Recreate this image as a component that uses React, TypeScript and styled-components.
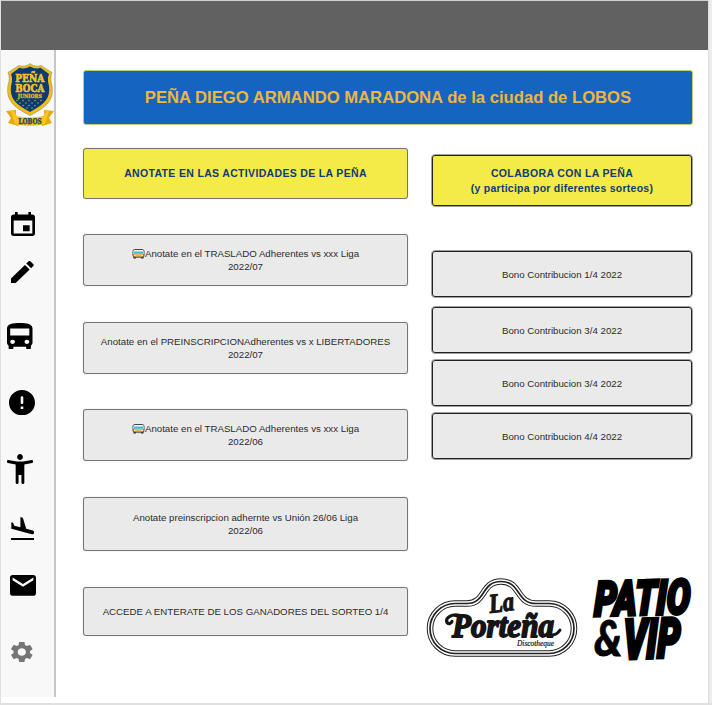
import React from "react";
import styled, { createGlobalStyle } from "styled-components";

const GlobalStyle = createGlobalStyle`
  * { box-sizing: border-box; }
  body { margin: 0; background: #fff; font-family: "Liberation Sans", Arial, sans-serif; }
`;

const Page = styled.div`
  width: 712px;
  height: 705px;
  display: flex;
  flex-direction: column;
  overflow: hidden;
  background: #fff;
  border-left: 1px solid #e0e0e0;
  border-bottom: 2px solid #e0e0e0;
  box-shadow: inset -3px 0 0 #ececec, inset -4px 0 0 #dcdcdc;
`;

const Header = styled.header`
  height: 50px;
  flex: none;
  margin-right: 4px;
  background: #616161;
  border-top: 1px solid #d0d0d0;
`;

const Body = styled.div`
  display: flex;
  height: 647px;
`;

const Sidebar = styled.nav`
  width: 55px;
  height: 647px;
  flex: none;
  background: #f8f8f8;
  border-right: 2px solid #c6c6c6;
  display: flex;
  flex-direction: column;
  align-items: flex-start;
`;

const IconSlot = styled.span<{ $left: number; $gap: number; $color?: string }>`
  display: block;
  line-height: 0;
  margin-left: ${(p) => p.$left}px;
  margin-top: ${(p) => p.$gap}px;
  color: ${(p) => p.$color ?? "#000"};
`;

const Main = styled.main`
  flex: 1;
  padding: 20px 0 0 27px;
`;

const Banner = styled.h1`
  width: 610px;
  height: 55px;
  margin: 0;
  display: flex;
  align-items: center;
  justify-content: center;
  background: #1565c0;
  border: 1px solid #b9cf7d;
  border-radius: 3px;
  color: #edb63f;
  font-size: 16.65px;
  line-height: 20px;
  white-space: nowrap;
`;

const Columns = styled.div`
  display: flex;
  gap: 23px;
  align-items: flex-start;
`;

const Column = styled.section<{ $width: number }>`
  width: ${(p) => p.$width}px;
  display: flex;
  flex-direction: column;
`;

const Card = styled.button<{ $gap: number; $height: number; $strong?: boolean }>`
  width: 100%;
  height: ${(p) => p.$height}px;
  margin: ${(p) => p.$gap}px 0 0;
  padding: 0;
  display: flex;
  flex-direction: column;
  align-items: center;
  justify-content: center;
  background: #eaeaea;
  border: 1px solid ${(p) => (p.$strong ? "#a0a0a0" : "#757575")};
  border-radius: ${(p) => (p.$strong ? 4 : 3)}px;
  box-shadow: ${(p) => (p.$strong ? "inset 0 0 0 1px #222" : "0 0 1px #aaa")};
  color: #2a2a2a;
  font-family: inherit;
  font-size: 9.7px;
  line-height: 13px;
  white-space: nowrap;
`;

const HeadingCard = styled(Card)`
  background: #f4eb49;
  color: #0d3c74;
  font-size: 10.5px;
  font-weight: 700;
  letter-spacing: 0.35px;
  line-height: 15px;
`;

const Line = styled.span<{ $spacing?: number }>`
  display: flex;
  align-items: center;
  letter-spacing: ${(p) => (p.$spacing === undefined ? "inherit" : `${p.$spacing}px`)};
`;

const Logos = styled.div`
  display: flex;
  margin: 115px 0 0 -6px;
  width: 275px;

  svg {
    flex: none;
    overflow: visible;
  }
`;

const icons = [
  { d: "M17 12h-5v5h5v-5zM16 1v2H8V1H6v2H5c-1.11 0-1.99.9-1.99 2L3 19a2 2 0 0 0 2 2h14c1.1 0 2-.9 2-2V5c0-1.1-.9-2-2-2h-1V1h-2zm3 18H5V8h14v11z", box: "3 1 18 20", x: 11, y: 212, w: 24, h: 24 },
  { d: "M3 17.25V21h3.75L17.81 9.94l-3.75-3.75L3 17.25zM20.71 7.04a.996.996 0 0 0 0-1.41l-2.34-2.34a.996.996 0 0 0-1.41 0l-1.83 1.83 3.75 3.75 1.83-1.83z", box: "3 3 18 18", x: 11, y: 261, w: 22.7, h: 22 },
  { d: "M4 16c0 .88.39 1.67 1 2.22V20c0 .55.45 1 1 1h1c.55 0 1-.45 1-1v-1h8v1c0 .55.45 1 1 1h1c.55 0 1-.45 1-1v-1.78c.61-.55 1-1.34 1-2.22V6c0-3.5-3.58-4-8-4s-8 .5-8 4v10zm3.5 1c-.83 0-1.5-.67-1.5-1.5S6.67 14 7.5 14s1.5.67 1.5 1.5S8.33 17 7.5 17zm9 0c-.83 0-1.5-.67-1.5-1.5s.67-1.5 1.5-1.5 1.5.67 1.5 1.5-.67 1.5-1.5 1.5zm1.5-6H6V6h12v5z", box: "4 2 16 19", x: 7.3, y: 322.5, w: 25.5, h: 26.5 },
  { d: "M12 2C6.48 2 2 6.48 2 12s4.48 10 10 10 10-4.48 10-10S17.52 2 12 2zm0 11c-.55 0-1-.45-1-1V8c0-.55.45-1 1-1s1 .45 1 1v4c0 .55-.45 1-1 1zm1 4h-2v-2h2v2z", box: "2 2 20 20", x: 9, y: 390, w: 26, h: 25.3 },
  { d: "M20.1 6c-2.4.6-5.3 1-8.1 1s-5.7-.4-8.1-1c-1.200-.2-1.500 1.700-.3 2 1.800.4 3.600.8 5.400 1v12q0 1 1 1t1-1v-5h2v5q0 1 1 1t1-1V9c1.800-.2 3.600-.6 5.400-1 1.200-.3.900-2.200-.3-2zM12 6c1.100 0 2-.9 2-2s-.9-2-2-2-2 .9-2 2 .9 2 2 2z", box: "3 2 18 20", x: 6.5, y: 454, w: 26, h: 30 },
  { d: "M2.500 19h19v2h-19v-2zm7.180-5.730l4.350 1.160 5.310 1.420c.8.210 1.620-.260 1.840-1.060.210-.8-.260-1.620-1.060-1.840l-5.310-1.420-2.760-9.020L10.120 2v8.280L5.150 8.950l-.930-2.320-1.450-.390v5.170l1.600.430 5.310 1.430z", box: "2.500 2 19 19", x: 10.7, y: 516.6, w: 23.5, h: 23.6 },
  { d: "M20 4H4c-1.100 0-1.990.9-1.990 2L2 18c0 1.100.9 2 2 2h16c1.100 0 2-.9 2-2V6c0-1.100-.9-2-2-2zm0 4l-8 5-8-5V6l8 5 8-5v2z", box: "2 4 20 16", x: 9.8, y: 575, w: 26, h: 20.8 },
  { d: "M19.140 12.940c.040-.300.060-.610.060-.940 0-.320-.020-.640-.070-.940l2.030-1.580c.180-.140.230-.410.120-.610l-1.920-3.320c-.120-.220-.370-.290-.590-.220l-2.390.960c-.5-.380-1.030-.7-1.620-.940l-.360-2.540c-.040-.240-.240-.410-.480-.410h-3.840c-.240 0-.430.170-.470.410l-.360 2.540c-.590.240-1.130.570-1.620.940l-2.390-.960c-.220-.080-.470 0-.590.220L2.740 8.870c-.120.210-.080.470.120.610l2.030 1.580c-.050.300-.090.630-.090.940s.020.640.070.940l-2.030 1.580c-.180.140-.230.410-.120.610l1.920 3.320c.120.220.370.290.590.220l2.390-.960c.5.380 1.030.7 1.620.940l.360 2.540c.050.240.240.410.480.410h3.840c.240 0 .440-.170.470-.410l.360-2.540c.590-.240 1.130-.560 1.620-.940l2.390.960c.220.080.470 0 .590-.220l1.920-3.320c.120-.220.070-.470-.120-.610l-2.010-1.580zM12 15.600c-1.980 0-3.600-1.620-3.600-3.600s1.620-3.600 3.600-3.600 3.600 1.620 3.600 3.600-1.620 3.600-3.600 3.600z", box: "2.600 2.400 18.800 19.200", x: 11, y: 642, w: 21.6, h: 20, color: "#757575" },
];

const Crest = () => (
  <svg width="50" height="66" viewBox="0 0 50 66" fontFamily="'DejaVu Serif', serif" fontWeight="700" textAnchor="middle">
    <path d="M25 1.500C22 4 18 5 14 3.500L3 10.500q2.500 5 0 13c-2 14 4 21 22 30 18-9 24-16 22-30q-2.500-8 0-13L36 3.500C32 5 28 4 25 1.500z" fill="#f3bd16" stroke="#8b8a74" strokeWidth=".6" />
    <path d="M25 4.500C21 6.500 18 7 14.500 5.700L6 12q2 5 0 12c-1.500 12 4 18 19 26 15-8 20.500-14 19-26q-2-7 0-12l-8.500-6.300C32 7 29 6.500 25 4.500z" fill="#073b72" />
    <g fill="#f5c324" stroke="#f5c324">
      <text x="24.800" y="19.500" fontSize="10.800" strokeWidth=".6" textLength="29" lengthAdjust="spacingAndGlyphs">PEÑA</text>
      <text x="24.800" y="30" fontSize="11.300" strokeWidth=".6" textLength="29" lengthAdjust="spacingAndGlyphs">BOCA</text>
      <text x="24.800" y="35.800" fontSize="5.500" strokeWidth=".25" textLength="24" lengthAdjust="spacingAndGlyphs">JUNIORS</text>
    </g>
    <g fill="#d5bb45">
      {[[12, 38.500], [18, 38.500], [24, 38.500], [30, 38.500], [36, 38.500], [15, 41], [21, 41], [27, 41], [33, 41], [18, 43.500], [24, 43.500], [30, 43.500], [22, 46], [27, 46]].map(([x, y]) => (
        <circle key={`${x}-${y}`} cx={x} cy={y} r=".7" />
      ))}
    </g>
    <path d="M1 49l10-1v9l5 3-3 4-10-3 3-5zM49 49l-10-1v9l-5 3 3 4 10-3-3-5z" fill="#e4aa12" />
    <path d="M8 48l4 6q13 3 26 0l4-6 2 1-4 13q-15 4-30 0L6 49z" fill="#fac51d" />
    <text x="25" y="61.500" fontSize="7.800" textLength="23" lengthAdjust="spacingAndGlyphs" fill="#194263" stroke="#194263" strokeWidth=".4">LOBOS</text>
  </svg>
);

const BusGlyph = () => (
  <svg width="13" height="11" viewBox="0 0 13 11">
    <rect x="1.500" y="8" width="2.500" height="2.500" rx=".6" fill="#222" />
    <rect x="9" y="8" width="2.500" height="2.500" rx=".6" fill="#222" />
    <rect x="1" y="1.500" width="11" height="7.700" rx="1.800" fill="#f3b64c" stroke="#444" />
    <path d="M1.500 6V3q0-1 1-1h8q1 0 1 1v3z" fill="#f4f4f4" />
    <rect x="2" y="3.500" width="9" height="2.300" fill="#35bee5" />
    <path d="M2 7.500h1.500M9.500 7.500H11" stroke="#fff3b0" />
  </svg>
);

const PLAQUE = "M30 28.500h12c19 0 14-22 34-22s15 22 35 22h13a24 24 0 0 1 0 50H30a25 25 0 0 1 0-50z";

const PortenaLogo = () => (
  <svg width="155" height="84" viewBox="0 0 155 84" fontStyle="italic" fill="#151515">
    <g fill="none" stroke="#222">
      <path d={PLAQUE} strokeWidth="6.600" />
      <path d={PLAQUE} strokeWidth="4.600" stroke="#fff" />
      <path d={PLAQUE} strokeWidth="1.700" />
    </g>
    <g fontFamily="'Liberation Serif', serif" fontWeight="700" stroke="#151515" strokeLinejoin="round">
      <text transform="translate(65 38) rotate(-7)" fontSize="27" strokeWidth="1.200" textLength="25" lengthAdjust="spacingAndGlyphs">La</text>
      <text transform="translate(27 62)" fontSize="34" strokeWidth="1.800" textLength="102" lengthAdjust="spacingAndGlyphs">Porteña</text>
      <text x="92" y="71" fontSize="8" fontWeight="400" strokeWidth=".2" textLength="37" lengthAdjust="spacingAndGlyphs">Discotheque</text>
    </g>
    <g fill="none" stroke="#151515" strokeLinecap="round">
      <path d="M35 40.500c-8-2-15 2-13 7 2 2 4 1 5-1" strokeWidth="3.200" />
      <path d="M127 60q5 0 8-5" strokeWidth="3" />
    </g>
  </svg>
);

const PatioLogo = () => (
  <svg width="114" height="100" viewBox="0 0 114 100" fontFamily="Roboto, sans-serif" fontWeight="900" fontStyle="italic" stroke="#000">
    <text transform="translate(14 41) rotate(-1.500) skewX(-3) scale(1 1.120)" fontSize="43" strokeWidth="3" textLength="96" lengthAdjust="spacingAndGlyphs">PATIO</text>
    <text x="14" y="81" fontFamily="Lato, sans-serif" fontSize="50" strokeWidth=".8" textLength="28" lengthAdjust="spacingAndGlyphs">&amp;</text>
    <text transform="translate(43 84) rotate(-2) skewX(-3) scale(1 1.200)" fontSize="46" strokeWidth="3" textLength="57" lengthAdjust="spacingAndGlyphs">VIP</text>
  </svg>
);

const activities = [
  { gap: 35, height: 52, bus: true, lines: ["Anotate en el TRASLADO Adherentes vs xxx Liga", "2022/07"] },
  { gap: 36, height: 52, bus: false, lines: ["Anotate en el PREINSCRIPCIONAdherentes vs x LIBERTADORES", "2022/07"] },
  { gap: 35, height: 52, bus: true, lines: ["Anotate en el TRASLADO Adherentes vs xxx Liga", "2022/06"] },
  { gap: 36, height: 54, bus: false, lines: ["Anotate preinscripcion adhernte vs Unión 26/06 Liga", "2022/06"] },
  { gap: 36, height: 49, bus: false, lines: ["ACCEDE A ENTERATE DE LOS GANADORES DEL SORTEO 1/4"] },
];

const bonds = [
  { gap: 44, label: "Bono Contribucion 1/4 2022" },
  { gap: 8, label: "Bono Contribucion 3/4 2022" },
  { gap: 5, label: "Bono Contribucion 3/4 2022" },
  { gap: 5, label: "Bono Contribucion 4/4 2022" },
];

export default function App() {
  return (
    <>
      <GlobalStyle />
      <Page>
        <Header />
        <Body>
          <Sidebar>
            <IconSlot $left={4} $gap={12}><Crest /></IconSlot>
            {icons.map((icon, i) => {
              const previousEnd = i === 0 ? 128 : icons[i - 1].y + icons[i - 1].h;
              return (
                <IconSlot key={icon.y} $left={icon.x - 1} $gap={icon.y - previousEnd} $color={icon.color}>
                  <svg width={icon.w} height={icon.h} viewBox={icon.box} preserveAspectRatio="none" fill="currentColor">
                    <path d={icon.d} />
                  </svg>
                </IconSlot>
              );
            })}
          </Sidebar>
          <Main>
            <Banner>PEÑA DIEGO ARMANDO MARADONA de la ciudad de LOBOS</Banner>
            <Columns>
              <Column $width={325}>
                <HeadingCard $gap={23} $height={51}>
                  <Line $spacing={0.33}>ANOTATE EN LAS ACTIVIDADES DE LA PEÑA</Line>
                </HeadingCard>
                {activities.map((a, i) => (
                  <Card key={i} $gap={a.gap} $height={a.height}>
                    {a.lines.map((line, n) => (
                      <Line key={line}>{a.bus && n === 0 && <BusGlyph />}{line}</Line>
                    ))}
                  </Card>
                ))}
              </Column>
              <Column $width={262}>
                <HeadingCard $gap={29} $height={53} $strong>
                  <Line>COLABORA CON LA PEÑA</Line>
                  <Line $spacing={0.25}>(y participa por diferentes sorteos)</Line>
                </HeadingCard>
                {bonds.map((b, i) => (
                  <Card key={i} $gap={i === 0 ? b.gap - 1 : b.gap} $height={48} $strong>{b.label}</Card>
                ))}
                <Logos><PortenaLogo /><PatioLogo /></Logos>
              </Column>
            </Columns>
          </Main>
        </Body>
      </Page>
    </>
  );
}
